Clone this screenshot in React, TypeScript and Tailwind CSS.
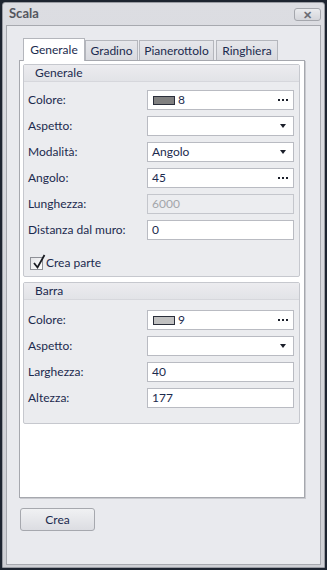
import React from "react";

const font = { fontFamily: "Lato, 'Noto Sans', sans-serif" };

function Field({
  kind,
  value,
  swatch,
}: {
  kind: "text" | "dots" | "select" | "disabled" | "color";
  value?: string;
  swatch?: string;
}) {
  const disabled = kind === "disabled";
  return (
    <div
      className={`flex h-[20px] w-[147px] items-center border px-[4px] text-[12px] ${
        disabled ? "border-[#c4c6cc] bg-[#ecedf0] text-[#a3a5aa]" : "border-[#b9bbc2] bg-white text-[#1b2a4e]"
      }`}
    >
      {swatch && <span className="mr-[3px] ml-[1px] h-[9px] w-[22px] border border-[#2a2e3a]" style={{ backgroundColor: swatch }} />}
      <span className="flex-1 leading-none">{value}</span>
      {(kind === "dots" || kind === "color") && (
        <span className="mr-[1px] flex gap-[2px]">
          <span className="h-[2px] w-[2px] bg-[#1b1f2a]" />
          <span className="h-[2px] w-[2px] bg-[#1b1f2a]" />
          <span className="h-[2px] w-[2px] bg-[#1b1f2a]" />
        </span>
      )}
      {kind === "select" && (
        <span className="mr-[3px] h-0 w-0 border-x-[3.5px] border-t-[4px] border-x-transparent border-t-[#1b1f2a]" />
      )}
    </div>
  );
}

function Row({ label, children }: { label: string; children: React.ReactNode }) {
  return (
    <div className="flex h-[20px] items-center justify-between pl-[4px] pr-[5px]">
      <span className="text-[12px] text-[#1b2a4e]">{label}</span>
      {children}
    </div>
  );
}

function Group({ title, children, className }: { title: string; children: React.ReactNode; className?: string }) {
  return (
    <div className={`rounded-[2px] border border-[#c6c8ce] bg-[#ebecef] ${className ?? ""}`}>
      <div className="flex h-[17px] items-center border-b border-[#d6d7dc] bg-gradient-to-b from-[#ececef] to-[#e2e3e7] pl-[11px] text-[12px] text-[#1b2a4e]">
        {title}
      </div>
      {children}
    </div>
  );
}

export default function App() {
  return (
    <div className="h-[570px] w-[327px] bg-[#1d2430] px-[2px] pt-[2px]" style={font}>
      <div className="flex h-[566px] flex-col rounded-t-[3px] border border-[#9a9ca3] bg-gradient-to-b from-[#dcdde2] to-[#cfd0d5]">
        {/* title bar */}
        <div className="flex h-[22px] items-center justify-between pl-[6px] pr-[3px]">
          <span className="text-[13px] font-bold text-[#54565e]">Scala</span>
          <div className="flex h-[13px] w-[27px] items-center justify-center rounded-[3px] border border-[#a5a7ad] bg-gradient-to-b from-[#eaebee] to-[#d4d5da] text-[11px] font-bold leading-none text-[#6b6d74]">
            ✕
          </div>
        </div>
        {/* client */}
        <div className="mx-[3px] mb-[2px] flex-1 border border-[#a7a9af] bg-[#e9eaee] pl-[12px] pt-[12px]">
          <div className="flex h-[22px] items-end pl-[4px]">
            <div className="z-10 -mb-px flex h-[23px] w-[62px] items-center justify-center border border-b-0 border-[#b4b6bc] bg-white text-[12px] text-[#1b2a4e]">
              Generale
            </div>
            <div className="flex h-[20px] w-[53px] items-center justify-center border border-b-0 border-[#b4b6bc] bg-gradient-to-b from-[#e6e7eb] to-[#d9dadf] text-[12px] text-[#1b2a4e]">
              Gradino
            </div>
            <div className="ml-[1px] flex h-[20px] w-[75px] items-center justify-center border border-b-0 border-[#b4b6bc] bg-gradient-to-b from-[#e6e7eb] to-[#d9dadf] text-[12px] text-[#1b2a4e]">
              Pianerottolo
            </div>
            <div className="ml-[2px] flex h-[20px] w-[62px] items-center justify-center border border-b-0 border-[#b4b6bc] bg-gradient-to-b from-[#e6e7eb] to-[#d9dadf] text-[12px] text-[#1b2a4e]">
              Ringhiera
            </div>
          </div>
          <div className="h-[438px] w-[286px] border border-[#a6a8ae] bg-white pl-[3px] pr-[4px] pt-[3px] shadow-[1px_1px_0_#c9cacf]">
            <Group title="Generale" className="h-[213px]">
              <div className="flex flex-col gap-[6px] pt-[8px]">
                <Row label="Colore:">
                  <Field kind="color" value="8" swatch="#808080" />
                </Row>
                <Row label="Aspetto:">
                  <Field kind="select" />
                </Row>
                <Row label="Modalità:">
                  <Field kind="select" value="Angolo" />
                </Row>
                <Row label="Angolo:">
                  <Field kind="dots" value="45" />
                </Row>
                <Row label="Lunghezza:">
                  <Field kind="disabled" value="6000" />
                </Row>
                <Row label="Distanza dal muro:">
                  <Field kind="text" value="0" />
                </Row>
              </div>
              <div className="mt-[14px] flex items-center pl-[6px]">
                <span className="relative flex h-[13px] w-[13px] items-center justify-center border border-[#8e9097] bg-gradient-to-br from-[#e4e5e8] to-white">
                  <svg viewBox="0 0 14 16" className="absolute -top-[4px] left-[1px] h-[16px] w-[14px]">
                    <path d="M2 9 L5.5 13.5 L12.5 1" fill="none" stroke="#1a1c22" strokeWidth="1.8" />
                  </svg>
                </span>
                <span className="ml-[3px] text-[12px] text-[#1b2a4e]">Crea parte</span>
              </div>
            </Group>
            <Group title="Barra" className="mt-[5px] h-[142px]">
              <div className="flex flex-col gap-[6px] pt-[10px]">
                <Row label="Colore:">
                  <Field kind="color" value="9" swatch="#c0c0c0" />
                </Row>
                <Row label="Aspetto:">
                  <Field kind="select" />
                </Row>
                <Row label="Larghezza:">
                  <Field kind="text" value="40" />
                </Row>
                <Row label="Altezza:">
                  <Field kind="text" value="177" />
                </Row>
              </div>
            </Group>
          </div>
          <button className="mt-[10px] ml-[1px] flex h-[23px] w-[75px] items-center justify-center rounded-[3px] border border-[#a6a8ae] bg-gradient-to-b from-[#f0f1f3] to-[#dcdde2] text-[12px] text-[#1b2a4e]">
            Crea
          </button>
        </div>
      </div>
    </div>
  );
}
